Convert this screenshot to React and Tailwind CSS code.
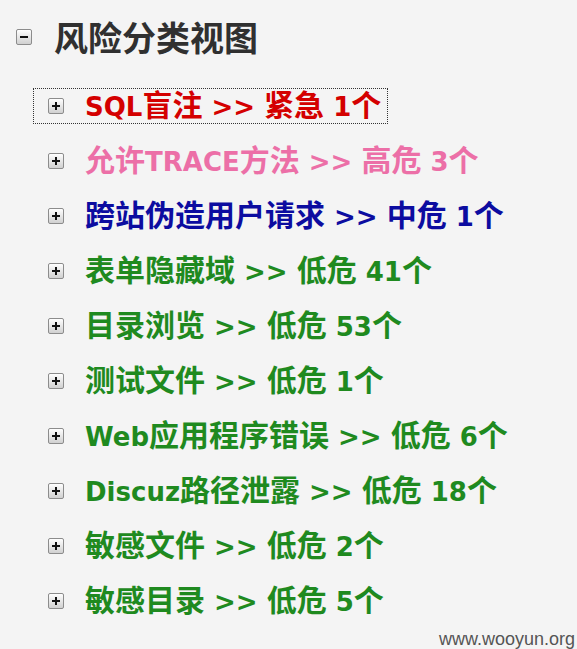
const items = [
  { name: "SQL盲注", level: "紧急", count: 1, color: "text-[#d40000]", focus: true },
  { name: "允许TRACE方法", level: "高危", count: 3, color: "text-[#ec6fa7]" },
  { name: "跨站伪造用户请求", level: "中危", count: 1, color: "text-[#0c0ca0]" },
  { name: "表单隐藏域", level: "低危", count: 41, color: "text-[#1f8a1f]" },
  { name: "目录浏览", level: "低危", count: 53, color: "text-[#1f8a1f]" },
  { name: "测试文件", level: "低危", count: 1, color: "text-[#1f8a1f]" },
  { name: "Web应用程序错误", level: "低危", count: 6, color: "text-[#1f8a1f]" },
  { name: "Discuz路径泄露", level: "低危", count: 18, color: "text-[#1f8a1f]" },
  { name: "敏感文件", level: "低危", count: 2, color: "text-[#1f8a1f]" },
  { name: "敏感目录", level: "低危", count: 5, color: "text-[#1f8a1f]" },
];

// CJK glyphs sit bigger than the latin ones in the shot, so size them separately
function Mixed({ text }) {
  const runs = text.match(/[\u4e00-\u9fff]+|[^\u4e00-\u9fff]+/g) || [];
  return runs.map((r, i) =>
    /[\u4e00-\u9fff]/.test(r) ? (
      <span key={i} className="text-[30px]">{r}</span>
    ) : (
      <span key={i}>{r}</span>
    )
  );
}

function ToggleBox({ open }) {
  return (
    <span className="flex h-[16px] w-[16px] shrink-0 items-center justify-center rounded-[2px] border border-[#8c8c8c] bg-gradient-to-b from-white to-[#d0d0d0]">
      <svg width="10" height="10" viewBox="0 0 10 10">
        <rect x="1" y="4" width="8" height="2" fill="#111" />
        {!open && <rect x="4" y="1" width="2" height="8" fill="#111" />}
      </svg>
    </span>
  );
}

export default function App() {
  return (
    <div className="relative min-h-[649px] w-full overflow-hidden bg-[#f4f4f4] pl-[16px] pt-[12px]" style={{ fontFamily: '"DejaVu Sans", "Noto Sans CJK SC", sans-serif' }}>
      <div className="flex h-[50px] items-center gap-[22px]">
        <ToggleBox open />
        <h1 className="text-[34px] font-semibold leading-none text-[#303030]" style={{ fontFamily: '"Noto Sans CJK SC", sans-serif' }}>风险分类视图</h1>
      </div>

      <ul className="mt-[16px]">
        {items.map((it) => (
          <li key={it.name} className="flex h-[55px] items-center pl-[17px]">
            <div className={`flex h-[36px] items-center gap-[21px] border border-dotted pl-[14px] pr-[6px] ${it.focus ? "border-[#333]" : "border-transparent"}`}>
              <ToggleBox />
              <span className={`whitespace-nowrap text-[26px] font-bold leading-none ${it.color}`}>
                <Mixed text={`${it.name} >> ${it.level} ${it.count}个`} />
              </span>
            </div>
          </li>
        ))}
      </ul>

      <div className="absolute bottom-[1px] right-[2px] text-[18px] leading-none text-[#555]" style={{ fontFamily: '"Liberation Sans", Arial, sans-serif' }}>
        www.wooyun.org
      </div>
    </div>
  );
}
